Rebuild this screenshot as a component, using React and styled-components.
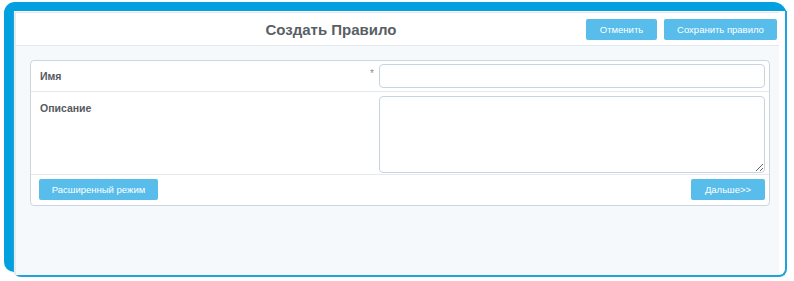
import styled, { createGlobalStyle } from 'styled-components';

const GlobalStyle = createGlobalStyle`
  html, body {
    margin: 0;
    padding: 0;
    background: #ffffff;
  }
  body {
    font-family: "Liberation Sans", Arial, sans-serif;
  }
  * {
    box-sizing: border-box;
  }
`;

const Screen = styled.div`
  width: 794px;
  height: 281px;
  padding: 2px 0 0 4px;
  overflow: hidden;
`;

const Backdrop = styled.div`
  width: 783px;
  height: 270px;
  background: #03a0e0;
  border-radius: 11px 14px 12px 10px;
  padding: 9px 0 0 9px;
`;

const Window = styled.div`
  width: 774px;
  height: 266px;
  background: #ffffff;
  border: solid #1ea3dc;
  border-width: 0 2px 2px 1px;
  border-radius: 0 0 8px 8px;
  padding: 1px 6px 0 0;
  display: flex;
  flex-direction: column;
`;

const Page = styled.div`
  flex: 1;
  display: flex;
  flex-direction: column;
  background: #f5f9fb;
  border-top: 1px solid #e2e7eb;
  border-left: 2px solid #e6ebef;
`;

const Header = styled.div`
  height: 33px;
  background: #ffffff;
  border-bottom: 1px solid #e3e8ec;
  display: flex;
  align-items: center;
  padding: 0 2px 0 60px;
`;

const Title = styled.h1`
  flex: 1;
  margin: 0;
  text-align: center;
  font-size: 15px;
  font-weight: bold;
  color: #5a5f65;
`;

const Actions = styled.div`
  display: flex;
  gap: 7px;
`;

const Button = styled.button`
  height: 21px;
  width: ${(p) => p.$w}px;
  border: none;
  border-radius: 2px;
  background: #58bdea;
  color: #ffffff;
  font-family: "Liberation Sans", Arial, sans-serif;
  font-size: 9.5px;
  padding: 0;
  cursor: pointer;
`;

const Panel = styled.div`
  margin: 14px 9px 0 14px;
  background: #ffffff;
  border: 1px solid #ccd5dd;
  border-radius: 4px;
`;

const Row = styled.div`
  display: grid;
  grid-template-columns: 1fr 9px 386px;
  align-items: ${(p) => (p.$top ? 'start' : 'center')};
  padding: ${(p) => p.$pad};
  border-bottom: 1px solid #e4e9ed;
`;

const Label = styled.div`
  padding: ${(p) => (p.$top ? '6px 0 0 9px' : '0 0 0 9px')};
  font-size: 10.5px;
  font-weight: bold;
  color: #555a60;
`;

const Required = styled.span`
  font-size: 10px;
  color: #8a8f94;
  align-self: start;
  padding-top: 4px;
`;

const TextInput = styled.input`
  height: 24px;
  width: 386px;
  border: 1px solid #c8d4e0;
  border-radius: 4px;
  background: #ffffff;
  outline: none;
`;

const TextArea = styled.textarea`
  height: 77px;
  width: 386px;
  border: 1px solid #c8d4e0;
  border-radius: 4px;
  background: #ffffff;
  outline: none;
  resize: both;
  display: block;
`;

const Footer = styled.div`
  display: flex;
  justify-content: space-between;
  align-items: center;
  padding: 4px 4px 5px 8px;
`;

export default function App() {
  return (
    <>
      <GlobalStyle />
      <Screen>
        <Backdrop>
          <Window>
            <Page>
              <Header>
                <Title>Создать Правило</Title>
                <Actions>
                  <Button $w={71}>Отменить</Button>
                  <Button $w={113}>Сохранить правило</Button>
                </Actions>
              </Header>
              <Panel>
                <Row $pad="3px 4px 3px 0">
                  <Label>Имя</Label>
                  <Required>*</Required>
                  <TextInput type="text" />
                </Row>
                <Row $top $pad="4px 4px 1px 0">
                  <Label $top>Описание</Label>
                  <span />
                  <TextArea />
                </Row>
                <Footer>
                  <Button $w={119}>Расширенный режим</Button>
                  <Button $w={74}>Дальше&gt;&gt;</Button>
                </Footer>
              </Panel>
            </Page>
          </Window>
        </Backdrop>
      </Screen>
    </>
  );
}
